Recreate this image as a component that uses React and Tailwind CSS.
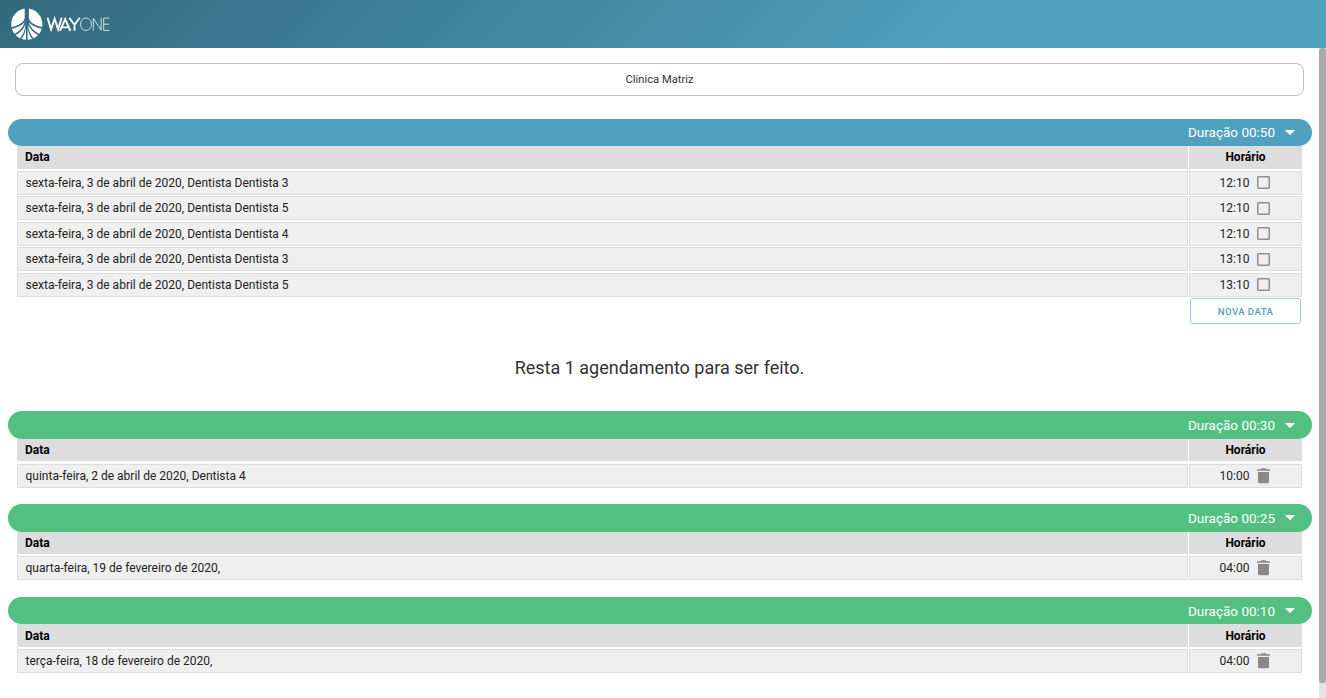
import React from "react";

const font = "font-['Roboto',sans-serif]";

const groups = [
  {
    duration: "00:50",
    color: "bg-[#50a1c0]",
    pending: true,
    rows: [
      ["sexta-feira, 3 de abril de 2020, Dentista Dentista 3", "12:10"],
      ["sexta-feira, 3 de abril de 2020, Dentista Dentista 5", "12:10"],
      ["sexta-feira, 3 de abril de 2020, Dentista Dentista 4", "12:10"],
      ["sexta-feira, 3 de abril de 2020, Dentista Dentista 3", "13:10"],
      ["sexta-feira, 3 de abril de 2020, Dentista Dentista 5", "13:10"],
    ],
  },
  { duration: "00:30", color: "bg-[#53c082]", rows: [["quinta-feira, 2 de abril de 2020, Dentista 4", "10:00"]] },
  { duration: "00:25", color: "bg-[#53c082]", rows: [["quarta-feira, 19 de fevereiro de 2020,", "04:00"]] },
  { duration: "00:10", color: "bg-[#53c082]", rows: [["terça-feira, 18 de fevereiro de 2020,", "04:00"]] },
];

function Logo() {
  return (
    <svg width="101" height="34" viewBox="0 0 101 34" className="block" aria-label="WAYONE">
      <defs>
        <clipPath id="disc">
          <circle cx="16.8" cy="17.2" r="15.6" />
        </clipPath>
      </defs>
      <g clipPath="url(#disc)" fill="#fff">
        <path d="M14.7 0V11C14 15.5 8 18.9 0 20.4V0Z" />
        <path d="M18.9 0V11C19.6 15.5 25.6 18.9 34 20.4V0Z" />
        <path d="M0 22C7 21 12 18.3 14.6 15.2C13.5 20 9 24.7 3.5 27.4Z" />
        <path d="M33.6 22C26.6 21 21.6 18.3 19 15.2C20.1 20 24.6 24.7 30.1 27.4Z" />
        <path d="M5 28.6C10.5 25.4 13.8 21.7 15.4 17.2C15.3 23 13 28.2 9.2 32.4Z" />
        <path d="M28.6 28.6C23.1 25.4 19.8 21.7 18.2 17.2C18.3 23 20.6 28.2 24.4 32.4Z" />
        <path d="M10.8 33C14 29 15.5 25 16 20V34H10.8Z" />
        <path d="M22.8 33C19.6 29 18.1 25 17.6 20V34H22.8Z" />
      </g>
      <g fill="none" stroke="#fff">
        <path strokeWidth="1.9" d="M37.5 10.8L41.1 22.4L44.6 11.8L48.1 22.4L51.7 10.8M50 23.8L55.2 12L60.4 23.8M52 20.4H58.4M59.2 10.8L64.5 17.8L69.8 10.8M64.5 17.5V23.8" />
        <path strokeWidth="0.75" d="M83.3 23.7V11.3L91.2 23.2V10.7M99.4 11.1H93.7V23.4H99.4M93.7 17.2H99" />
        <ellipse cx="76" cy="17.2" rx="5.5" ry="6.2" strokeWidth="0.75" />
      </g>
    </svg>
  );
}

function Trash() {
  return (
    <svg width="13" height="16" viewBox="0 0 13 16" className="block" fill="#888">
      <path d="M0 1.2H3.5L4.5 .3H8.5L9.5 1.2H13V2.8H0ZM1 4H12V13.8Q12 15.2 10.5 15.2H2.5Q1 15.2 1 13.8Z" />
    </svg>
  );
}

function Group({ group }) {
  return (
    <section>
      <div className={`${group.color} h-[27.4px] rounded-full flex items-center justify-end pr-[17px] text-white text-[13.5px]`}>
        <span className={group.pending ? "pb-[0.5px]" : "pt-[0.5px]"}>Duração {group.duration}</span>
        <svg width="10" height="5" viewBox="0 0 10 5" className="ml-[10px]" fill="#fff">
          <path d="M0.8 0H9.2Q10 0 9.4 .8L5.7 4.6Q5 5.2 4.3 4.6L.6 .8Q0 0 .8 0Z" />
        </svg>
      </div>
      <div className="ml-[9px] mr-[10px] text-[12px]">
        <div className="flex gap-px h-[22.6px] mb-[2.25px] font-bold text-black">
          <div className="flex-1 bg-[#ddd] flex items-center pl-2 pt-[0.2px]">Data</div>
          <div className="w-[113px] bg-[#ddd] flex items-center justify-center pt-[0.2px]">Horário</div>
        </div>
        <div className="flex flex-col gap-[1.45px] text-[#222]">
          {group.rows.map(([date, time], i) => (
            <div key={i} className="flex gap-px h-[24px]">
              <div className="flex-1 bg-[#efefef] border border-[#ddd] flex items-center pl-[7.5px]">{date}</div>
              <div className="w-[113px] bg-[#efefef] border border-[#ddd] flex items-center justify-center pr-[1.6px]">
                <span className="mr-[7.5px]">{time}</span>
                {group.pending ? <span className="size-[13px] border-[1.5px] border-[#909090] rounded-[1px] shadow-[inset_0_0_0_0.5px_#909090]" /> : <Trash />}
              </div>
            </div>
          ))}
        </div>
      </div>
    </section>
  );
}

export default function App() {
  return (
    <div className={`${font} h-[698px] w-[1326px] flex flex-col overflow-hidden bg-white`}>
      <header className="h-[48px] shrink-0 bg-[linear-gradient(135deg,#33697d_0%,#50a1c0_75%,#50a1c0_100%)] flex items-center pl-[10px]">
        <Logo />
      </header>
      <div className="flex flex-1 min-h-0">
        <main className="flex-1 pl-2 pr-[7px] pt-[15px]">
          <div className="mx-[7px] mr-2 h-[33px] rounded-[8px] border border-[#c0c0c0] flex items-center justify-center pt-px text-[11.2px] text-[#333]">
            Clínica Matriz
          </div>
          <div className="mt-[22.7px]">
            <Group group={groups[0]} />
          </div>
          <div className="flex justify-end pr-[11px] mt-[1.3px]">
            <button className="w-[111px] h-[26px] pt-[2px] border border-[#9accdd] rounded-[3px] text-[#50a1c0] text-[9.6px] font-medium tracking-[0.45px]">NOVA DATA</button>
          </div>
          <p className="h-[87.45px] flex items-center justify-center pr-px text-[18px] text-[#333]">Resta 1 agendamento para ser feito.</p>
          <div className="flex flex-col gap-[16.55px]">
            {groups.slice(1).map((g) => (
              <Group key={g.duration} group={g} />
            ))}
          </div>
        </main>
        <div className="w-[7px] bg-[#e4e4e4]">
          <div className="h-[635px] bg-[#aaa] rounded-[3px]" />
        </div>
      </div>
    </div>
  );
}
